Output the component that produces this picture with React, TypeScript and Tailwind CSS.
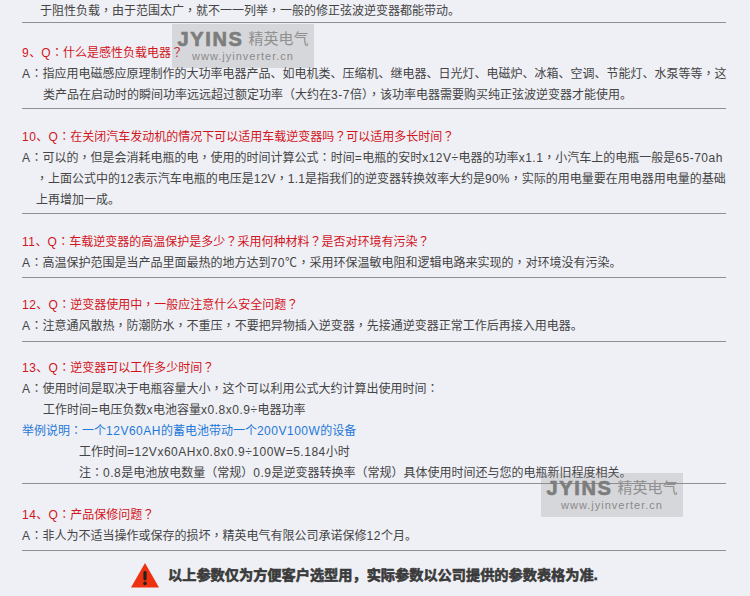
const font = "font-['Liberation_Sans','Noto_Sans_CJK_SC',sans-serif]";

type Faq = {
  q: string;
  pt: string;
  pb: string;
  lines: { text: string; indent?: string; color?: string; box?: string; tight?: boolean }[];
};

const faqs: Faq[] = [
  {
    q: "9、Q：什么是感性负载电器？",
    pt: "pt-[20px]",
    pb: "pb-[2px]",
    lines: [
      { text: "A：指应用电磁感应原理制作的大功率电器产品、如电机类、压缩机、继电器、日光灯、电磁炉、冰箱、空调、节能灯、水泵等等，这" },
      { text: "类产品在启动时的瞬间功率远远超过额定功率（大约在3-7倍），该功率电器需要购买纯正弦波逆变器才能使用。", indent: "pl-[21px]" },
    ],
  },
  {
    q: "10、Q：在关闭汽车发动机的情况下可以适用车载逆变器吗？可以适用多长时间？",
    pt: "pt-[18px]",
    pb: "pb-[2px]",
    lines: [
      { text: "A：可以的，但是会消耗电瓶的电，使用的时间计算公式：时间=电瓶的安时x12V÷电器的功率x1.1，小汽车上的电瓶一般是65-70ah" },
      { text: "，上面公式中的12表示汽车电瓶的电压是12V，1.1是指我们的逆变器转换效率大约是90%，实际的用电量要在用电器用电量的基础", indent: "pl-[14px]", tight: true },
      { text: "上再增加一成。", indent: "pl-[14px]" },
    ],
  },
  {
    q: "11、Q：车载逆变器的高温保护是多少？采用何种材料？是否对环境有污染？",
    pt: "pt-[18px]",
    pb: "pb-[3px]",
    lines: [{ text: "A：高温保护范围是当产品里面最热的地方达到70℃，采用环保温敏电阻和逻辑电路来实现的，对环境没有污染。" }],
  },
  {
    q: "12、Q：逆变器使用中，一般应注意什么安全问题？",
    pt: "pt-[17px]",
    pb: "pb-[4px]",
    lines: [{ text: "A：注意通风散热，防潮防水，不重压，不要把异物插入逆变器，先接通逆变器正常工作后再接入用电器。" }],
  },
  {
    q: "13、Q：逆变器可以工作多少时间？",
    pt: "pt-[16px]",
    pb: "pb-0",
    lines: [
      { text: "A：使用时间是取决于电瓶容量大小，这个可以利用公式大约计算出使用时间：" },
      { text: "工作时间=电压负数x电池容量x0.8x0.9÷电器功率", indent: "pl-[21px]" },
      { text: "举例说明：一个12V60AH的蓄电池带动一个200V100W的设备", color: "text-[#1e78d8]" },
      { text: "工作时间=12Vx60AHx0.8x0.9÷100W=5.184小时", indent: "pl-[57px]" },
      { text: "注：0.8是电池放电数量（常规）0.9是逆变器转换率（常规）具体使用时间还与您的电瓶新旧程度相关。", indent: "pl-[57px]", box: "h-[20px]" },
    ],
  },
  {
    q: "14、Q：产品保修问题？",
    pt: "pt-[21px]",
    pb: "pb-[3px]",
    lines: [{ text: "A：非人为不适当操作或保存的损坏，精英电气有限公司承诺保修12个月。" }],
  },
];

// the reference centres full-width punctuation in its cell and spaces latin runs out
const punct: Record<string, string> = {
  "：": "font-['Noto_Sans_CJK_JP'] leading-none",
  "？": "font-['Noto_Sans_CJK_JP'] leading-none",
  "，": "font-['Noto_Sans_CJK_TC'] leading-none",
  "（": "font-['Noto_Sans_CJK_KR'] leading-none",
  "）": "font-['Noto_Sans_CJK_KR'] leading-none",
};

function Cjk({ text, tight }: { text: string; tight?: boolean }) {
  return (
    <>
      {text.split(/([：？，（）]|[\x21-\x7e÷℃]+)/).map((part, i) => {
        if (punct[part]) {
          return (
            <span key={i} className={punct[part]}>
              {part}
            </span>
          );
        }
        if (/^[\x21-\x7e÷℃]+$/.test(part)) {
          return (
            <span key={i} className={tight ? "tracking-[0.2px]" : "tracking-[0.5px]"}>
              {part}
            </span>
          );
        }
        return part;
      })}
    </>
  );
}

function Watermark({ pos }: { pos: string }) {
  return (
    <div className={`absolute ${pos} flex h-11 w-[142px] flex-col items-center bg-[#8c8c8c]/25`}>
      <div className="mt-[2px] flex h-[25px] items-center gap-[5px]">
        <span className="text-[20px] leading-none font-black tracking-[1.6px] text-[#7d7d7d] [-webkit-text-stroke:0.7px_#7d7d7d]">
          JYINS
        </span>
        <span className="text-[15px] leading-none text-[#909090]">精英电气</span>
      </div>
      <span className="text-[11px] leading-[10px] tracking-[1px] text-[#8a8a8a]">www.jyinverter.cn</span>
    </div>
  );
}

export default function App() {
  return (
    <div className={`${font} relative h-[596px] w-[750px] overflow-hidden bg-[#eff0f5] text-[12px] leading-[21px] text-[#444444]`}>
      <div className="mx-[22px] w-[704px]">
        <div className="h-[23px] border-b border-[#8f8f8f] pt-[1px] pl-[18px] whitespace-nowrap">
          <Cjk text="于阻性负载，由于范围太广，就不一一列举，一般的修正弦波逆变器都能带动。" />
        </div>
        {faqs.map((faq) => (
          <div key={faq.q} className={`${faq.pt} ${faq.pb} border-b border-[#8f8f8f] whitespace-nowrap`}>
            <div className="text-[#d2141c]">
              <Cjk text={faq.q} />
            </div>
            {faq.lines.map((line) => (
              <div key={line.text} className={`${line.indent ?? ""} ${line.color ?? ""} ${line.box ?? ""}`}>
                <Cjk text={line.text} tight={line.tight} />
              </div>
            ))}
          </div>
        ))}
      </div>
      <div className="mt-[12px] flex items-center pl-[131px]">
        <svg width="28" height="25" viewBox="0 0 28 25">
          <path d="M14 0 L28 24.5 L0 24.5 Z" fill="#ee3210" />
          <rect x="12.4" y="8" width="3.2" height="9.5" rx="1.4" fill="#222" />
          <circle cx="14" cy="20.4" r="1.8" fill="#222" />
        </svg>
        <span className="ml-[9px] text-[14.2px] leading-none font-bold text-[#3a3a3a] [-webkit-text-stroke:0.6px_#3a3a3a]">
          以上参数仅为方便客户选型用，实际参数以公司提供的参数表格为准.
        </span>
      </div>
      <Watermark pos="left-[172px] top-[24px]" />
      <Watermark pos="left-[541px] top-[473px]" />
    </div>
  );
}
